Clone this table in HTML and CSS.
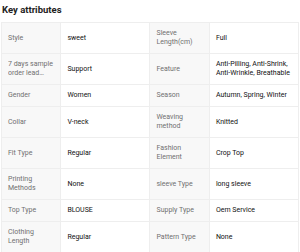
FILE: index.html
```html
<!DOCTYPE html>
<html lang="en">
<head>
    <meta charset="UTF-8">
    <title>Key attributes</title>
    <link rel="stylesheet" href="styles.css">
</head>
<body>
    <div class="attrs">
        <h2 class="attrs-title">Key attributes</h2>
        <table class="attrs-table">
            <colgroup>
                <col class="col-label">
                <col class="col-value">
                <col class="col-label">
                <col class="col-value">
            </colgroup>
            <tr>
                <td class="label">Style</td>
                <td class="value">sweet</td>
                <td class="label">Sleeve Length(cm)</td>
                <td class="value">Full</td>
            </tr>
            <tr>
                <td class="label"><div class="clamp">7 days sample order lead time</div></td>
                <td class="value">Support</td>
                <td class="label">Feature</td>
                <td class="value">Anti-Pilling, Anti-Shrink, Anti-Wrinkle, Breathable</td>
            </tr>
            <tr>
                <td class="label">Gender</td>
                <td class="value">Women</td>
                <td class="label">Season</td>
                <td class="value">Autumn, Spring, Winter</td>
            </tr>
            <tr>
                <td class="label">Collar</td>
                <td class="value">V-neck</td>
                <td class="label">Weaving method</td>
                <td class="value">Knitted</td>
            </tr>
            <tr>
                <td class="label">Fit Type</td>
                <td class="value">Regular</td>
                <td class="label">Fashion Element</td>
                <td class="value">Crop Top</td>
            </tr>
            <tr>
                <td class="label">Printing Methods</td>
                <td class="value">None</td>
                <td class="label">sleeve Type</td>
                <td class="value">long sleeve</td>
            </tr>
            <tr>
                <td class="label">Top Type</td>
                <td class="value">BLOUSE</td>
                <td class="label">Supply Type</td>
                <td class="value">Oem Service</td>
            </tr>
            <tr>
                <td class="label">Clothing Length</td>
                <td class="value">Regular</td>
                <td class="label">Pattern Type</td>
                <td class="value">None</td>
            </tr>
        </table>
    </div>
</body>
</html>
```

FILE: styles.css
```css
body {
    margin: 0;
    padding: 0;
    background-color: #fff;
    font-family: Roboto, "Liberation Sans", sans-serif;
    color: #222;
}
.attrs {
    padding: 4px 1px 0;
}
.attrs-title {
    margin: 0 0 7px 1px;
    font-size: 9.5px;
    line-height: 11px;
    font-weight: 700;
    color: #222;
}
.attrs-table {
    width: 100%;
    table-layout: fixed;
    border-collapse: collapse;
    border: 1px solid #eee;
}
.col-label {
    width: 20%;
}
.col-value {
    width: 30%;
}
.attrs-table td {
    border: 1px solid #eee;
    padding: 6px 6px;
    font-size: 7px;
    line-height: 9px;
    vertical-align: middle;
}
.label {
    background-color: #f8f8f8;
    color: #707070;
}
.value {
    color: #111;
}
.clamp {
    display: -webkit-box;
    -webkit-line-clamp: 2;
    -webkit-box-orient: vertical;
    overflow: hidden;
}
```
